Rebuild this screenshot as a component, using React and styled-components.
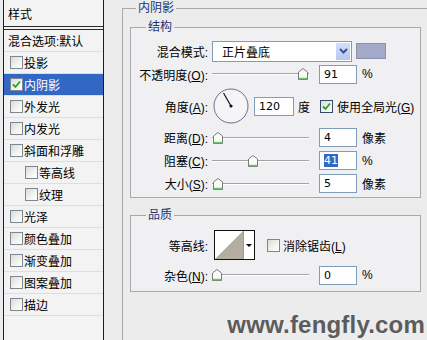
import React from 'react';
import styled, {createGlobalStyle} from 'styled-components';

const GlobalStyle = createGlobalStyle`
  *, *::before, *::after {
    box-sizing: border-box;
  }
  html, body {
    margin: 0;
    padding: 0;
    background: #ececec;
  }
  body {
    font-family: "Liberation Sans", "Noto Sans CJK SC", sans-serif;
    font-size: 12px;
    color: #000;
  }
`;

const Window = styled.div`
  position: relative;
  width: 427px;
  height: 340px;
  overflow: hidden;
  display: flex;
  background: #ececec;
`;

/* left: style list */
const StyleList = styled.div`
  flex: none;
  margin-left: 3px;
  width: 101px;
  height: 100%;
  border-left: 1px solid #1e1e1e;
  border-right: 1px solid #1e1e1e;
  background: #f3f3f3;
`;

const ListHeader = styled.div`
  height: 30px;
  display: flex;
  align-items: center;
  padding-left: 4px;
  border-bottom: 4px double #2a2a2a;
`;

const ListItem = styled.div`
  height: 22px;
  display: flex;
  align-items: center;
  gap: 1px;
  padding-left: ${props => props.$indent}px;
  border-bottom: 1px solid #dedede;
  background: ${props => (props.$active ? '#3367c4' : 'transparent')};
  color: ${props => (props.$active ? '#fff' : '#000')};
  white-space: nowrap;
`;

const Box = styled.span`
  flex: none;
  width: 13px;
  height: 13px;
  display: inline-flex;
  align-items: center;
  justify-content: center;
  border: 1px solid ${props => (props.$dark ? '#334a66' : '#7d8794')};
  background: linear-gradient(135deg, #dcdcd4 0%, #f4f4f0 60%, #fff 100%);
`;

/* right: settings */
const Main = styled.div`
  flex: 1;
  min-width: 0;
  padding: 1px 0 0 18px;
`;

const OuterGroup = styled.fieldset`
  margin: 0;
  width: 308px;
  min-height: 420px;
  padding: 5px 8px 0 7px;
  border: 1px solid #a9a9a9;
`;

const Legend = styled.legend`
  margin-left: ${props => props.$indent}px;
  padding: 0 2px;
  line-height: 14px;
  color: #1c3370;
`;

const Group = styled.fieldset`
  margin: ${props => props.$top}px 0 0;
  padding: ${props => props.$pad};
  border: 1px solid #a9a9a9;
  background: #f0f0f3;
  display: flex;
  flex-direction: column;
`;

const Row = styled.div`
  height: ${props => props.$h}px;
  display: flex;
  align-items: center;
  white-space: nowrap;
`;

const Label = styled.span`
  flex: none;
  width: 77px;
  text-align: right;
`;

const Key = styled.span`
  text-decoration: underline;
`;

const SelectBox = styled.div`
  flex: none;
  width: 140px;
  height: 21px;
  margin-left: 4px;
  display: flex;
  border: 1px solid #7f9db9;
  background: #fff;
`;

const SelectText = styled.span`
  flex: 1;
  display: flex;
  align-items: center;
  padding-left: 9px;
`;

const SelectButton = styled.span`
  width: 16px;
  display: flex;
  align-items: center;
  justify-content: center;
  border: 1px solid #fff;
  background: linear-gradient(#d2defc, #b4c7f4);
`;

const Swatch = styled.span`
  flex: none;
  width: 30px;
  height: 16px;
  margin-left: 4px;
  border: 1px solid #8b91ac;
  background: #a2a9c9;
`;

const Slider = styled.div`
  flex: none;
  position: relative;
  width: 97px;
  height: 12px;
  margin-left: 4px;

  &::before {
    content: '';
    position: absolute;
    left: 0;
    right: 0;
    top: 5px;
    height: 2px;
    border-top: 1px solid #a4a4a4;
    border-bottom: 1px solid #fff;
  }
`;

const Thumb = styled.svg`
  position: absolute;
  top: 0;
`;

const NumBox = styled.div`
  flex: none;
  width: ${props => props.$w || 38}px;
  height: 19px;
  margin-left: ${props => props.$gap}px;
  display: flex;
  align-items: center;
  padding-left: 4px;
  border: 1px solid #7f9db9;
  background: #fff;
  font-family: "DejaVu Sans", "Liberation Sans", sans-serif;
  font-size: 11px;
`;

const Selected = styled.span`
  background: #3367c4;
  color: #fff;
`;

const Unit = styled.span`
  margin-left: ${props => props.$gap || 5}px;
`;

const DialSvg = styled.svg`
  flex: none;
  margin-left: 5px;
`;

const CheckWrap = styled.span`
  display: inline-flex;
  align-items: center;
  gap: ${props => props.$gap}px;
  margin-left: ${props => props.$left}px;
`;

const ContourBox = styled.div`
  flex: none;
  display: flex;
  width: 41px;
  height: 30px;
  margin-left: 6px;
  border: 1px solid #111;
  background: #fff;
`;

const ContourArrow = styled.span`
  flex: 1;
  display: flex;
  align-items: center;
  justify-content: center;
  border-left: 1px solid #9a9a9a;

  &::after {
    content: '';
    border-top: 3px solid #000;
    border-left: 3px solid transparent;
    border-right: 3px solid transparent;
  }
`;

const Watermark = styled.div`
  position: absolute;
  right: 2px;
  bottom: 1px;
  font-family: "Liberation Sans", Arial, sans-serif;
  font-weight: bold;
  font-size: 24px;
  letter-spacing: 0.2px;
  color: #5c5c5c;
`;

const Check = ({checked, dark}) => (
  <Box $dark={dark}>
    {checked && (
      <svg width="9" height="9" viewBox="0 0 9 9">
        <path d="M1 4.5 L3.5 7 L8 1.5" stroke="#26a326" strokeWidth="1.8" fill="none" />
      </svg>
    )}
  </Box>
);

const SliderThumb = ({pos}) => (
  <Thumb width="10" height="12" viewBox="0 0 10 12" style={{left: pos}}>
    <path d="M0.5 4 L5 0.5 L9.5 4 L9.5 11.5 L0.5 11.5 Z" fill="#fbfbf8" stroke="#7b7b7b" />
    <line x1="1" y1="10.5" x2="9" y2="10.5" stroke="#6fc46f" strokeWidth="1.5" />
  </Thumb>
);

const Dial = ({angle}) => {
  const r = (angle * Math.PI) / 180;
  const x = 18 + 15 * Math.cos(r);
  const y = 18 - 15 * Math.sin(r);
  return (
    <DialSvg width="36" height="36" viewBox="0 0 36 36">
      <circle cx="18" cy="18" r="17" fill="#f5f5f8" stroke="#6d6d88" />
      <line x1="18" y1="18" x2={x} y2={y} stroke="#111" strokeWidth="1.2" />
      <circle cx="18" cy="18" r="1.6" fill="#111" />
    </DialSvg>
  );
};

const styles = [
  {name: '投影', indent: 6},
  {name: '内阴影', indent: 6, active: true},
  {name: '外发光', indent: 6},
  {name: '内发光', indent: 6},
  {name: '斜面和浮雕', indent: 6},
  {name: '等高线', indent: 21},
  {name: '纹理', indent: 21},
  {name: '光泽', indent: 6},
  {name: '颜色叠加', indent: 6},
  {name: '渐变叠加', indent: 6},
  {name: '图案叠加', indent: 6},
  {name: '描边', indent: 6},
];

const sliders = [
  {label: '距离', key: 'D', pos: 1, value: '4', unit: '像素'},
  {label: '阻塞', key: 'C', pos: 36, value: '41', unit: '%', selected: true},
  {label: '大小', key: 'S', pos: 1, value: '5', unit: '像素'},
];

export default function App() {
  return (
    <>
      <GlobalStyle />
      <Window>
        <StyleList>
          <ListHeader>样式</ListHeader>
          <ListItem $indent={4}>混合选项:默认</ListItem>
          {styles.map(s => (
            <ListItem key={s.name} $indent={s.indent} $active={s.active}>
              <Check checked={s.active} />
              {s.name}
            </ListItem>
          ))}
        </StyleList>

        <Main>
          <OuterGroup>
            <Legend $indent={6}>内阴影</Legend>

            <Group $top={0} $pad="6px 0 2px">
              <Legend $indent={15}>结构</Legend>
              <Row $h={22}>
                <Label>混合模式:</Label>
                <SelectBox>
                  <SelectText>正片叠底</SelectText>
                  <SelectButton>
                    <svg width="9" height="6" viewBox="0 0 9 6">
                      <path d="M1 1 L4.5 4.5 L8 1" stroke="#3c5486" strokeWidth="2" fill="none" />
                    </svg>
                  </SelectButton>
                </SelectBox>
                <Swatch />
              </Row>
              <Row $h={24}>
                <Label>
                  不透明度(<Key>O</Key>):
                </Label>
                <Slider>
                  <SliderThumb pos={86} />
                </Slider>
                <NumBox $gap={10}>91</NumBox>
                <Unit>%</Unit>
              </Row>
              <Row $h={40}>
                <Label>
                  角度(<Key>A</Key>):
                </Label>
                <Dial angle={120} />
                <NumBox $gap={5} $w={40}>
                  120
                </NumBox>
                <Unit $gap={4}>度</Unit>
                <CheckWrap $left={10} $gap={4}>
                  <Check checked dark />
                  <span>
                    使用全局光(<Key>G</Key>)
                  </span>
                </CheckWrap>
              </Row>
              {sliders.map(s => (
                <Row $h={23} key={s.label}>
                  <Label>
                    {s.label}(<Key>{s.key}</Key>):
                  </Label>
                  <Slider>
                    <SliderThumb pos={s.pos} />
                  </Slider>
                  <NumBox $gap={10}>{s.selected ? <Selected>{s.value}</Selected> : s.value}</NumBox>
                  <Unit>{s.unit}</Unit>
                </Row>
              ))}
            </Group>

            <Group $top={10} $pad="3px 0 6px">
              <Legend $indent={15}>品质</Legend>
              <Row $h={40}>
                <Label>等高线:</Label>
                <ContourBox>
                  <svg width="28" height="28" viewBox="0 0 28 28">
                    <rect width="28" height="28" fill="#fff" />
                    <path d="M0 28 L28 0 L28 28 Z" fill="#b3ada2" />
                  </svg>
                  <ContourArrow />
                </ContourBox>
                <CheckWrap $left={12} $gap={3}>
                  <Check />
                  <span>
                    消除锯齿(<Key>L</Key>)
                  </span>
                </CheckWrap>
              </Row>
              <Row $h={20}>
                <Label>
                  杂色(<Key>N</Key>):
                </Label>
                <Slider>
                  <SliderThumb pos={0} />
                </Slider>
                <NumBox $gap={10}>0</NumBox>
                <Unit>%</Unit>
              </Row>
            </Group>
          </OuterGroup>
        </Main>

        <Watermark>www.fengfly.com</Watermark>
      </Window>
    </>
  );
}
